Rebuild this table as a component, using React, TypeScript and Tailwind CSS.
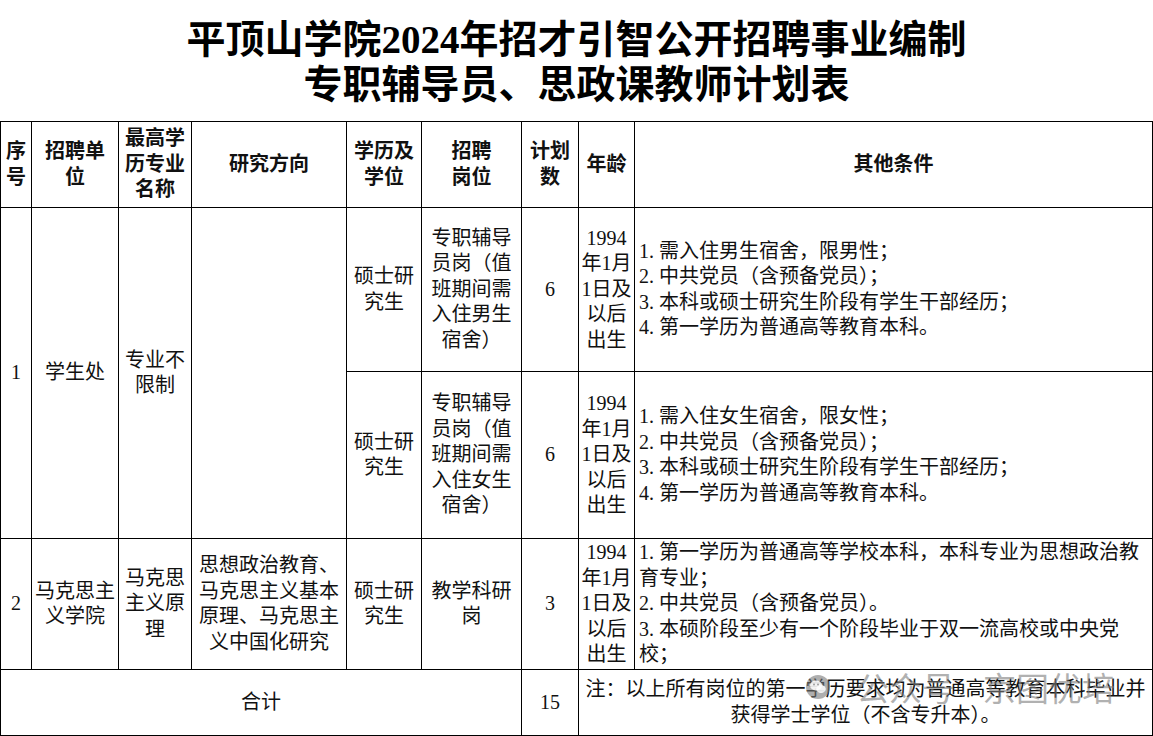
import React from "react";

type CellProps = {
  lines: string[];
  className?: string;
  bold?: boolean;
  align?: "center" | "left";
};

function Cell({ lines, className = "", bold = false, align = "center" }: CellProps) {
  return (
    <div
      className={
        "border-r border-b border-black flex items-center " +
        (align === "center" ? "justify-center text-center " : "justify-start text-left pl-[4px] ") +
        (bold ? "font-bold " : "font-normal ") +
        className
      }
    >
      <div className="leading-[25.5px]">
        {lines.map((l, i) => (
          <div key={i} className="whitespace-nowrap">
            {l}
          </div>
        ))}
      </div>
    </div>
  );
}

const age = ["1994", "年1月", "1日及", "以后", "出生"];

export default function App() {
  return (
    <div className="relative w-[1153px] h-[736px] overflow-hidden bg-white text-[#111] [font-family:'Liberation_Serif','Noto_Sans_CJK_SC',serif]">
      <div className="h-[121px] flex flex-col items-center pt-[17px] text-[39px] font-bold leading-[45px] text-black">
        <div className="whitespace-nowrap">平顶山学院2024年招才引智公开招聘事业编制</div>
        <div className="whitespace-nowrap">专职辅导员、思政课教师计划表</div>
      </div>

      <div className="grid w-[1153px] border-l border-t border-black grid-cols-[31px_87px_73px_155px_75px_100px_57px_56px_518px] grid-rows-[86px_164px_167px_131px_66px] text-[20px]">
        {/* header */}
        <Cell bold lines={["序", "号"]} />
        <Cell bold lines={["招聘单", "位"]} />
        <Cell bold lines={["最高学", "历专业", "名称"]} />
        <Cell bold lines={["研究方向"]} />
        <Cell bold lines={["学历及", "学位"]} />
        <Cell bold lines={["招聘", "岗位"]} />
        <Cell bold lines={["计划", "数"]} />
        <Cell bold lines={["年龄"]} />
        <Cell bold lines={["其他条件"]} />

        {/* row 1a */}
        <Cell className="row-span-2" lines={["1"]} />
        <Cell className="row-span-2" lines={["学生处"]} />
        <Cell className="row-span-2" lines={["专业不", "限制"]} />
        <Cell className="row-span-2" lines={[""]} />
        <Cell lines={["硕士研", "究生"]} />
        <Cell lines={["专职辅导", "员岗（值", "班期间需", "入住男生", "宿舍）"]} />
        <Cell lines={["6"]} />
        <Cell lines={age} />
        <Cell
          align="left"
          lines={[
            "1. 需入住男生宿舍，限男性；",
            "2. 中共党员（含预备党员）；",
            "3. 本科或硕士研究生阶段有学生干部经历；",
            "4. 第一学历为普通高等教育本科。",
          ]}
        />

        {/* row 1b */}
        <Cell lines={["硕士研", "究生"]} />
        <Cell lines={["专职辅导", "员岗（值", "班期间需", "入住女生", "宿舍）"]} />
        <Cell lines={["6"]} />
        <Cell lines={age} />
        <Cell
          align="left"
          lines={[
            "1. 需入住女生宿舍，限女性；",
            "2. 中共党员（含预备党员）；",
            "3. 本科或硕士研究生阶段有学生干部经历；",
            "4. 第一学历为普通高等教育本科。",
          ]}
        />

        {/* row 2 */}
        <Cell lines={["2"]} />
        <Cell lines={["马克思主", "义学院"]} />
        <Cell lines={["马克思", "主义原", "理"]} />
        <Cell lines={["思想政治教育、", "马克思主义基本", "原理、马克思主", "义中国化研究"]} />
        <Cell lines={["硕士研", "究生"]} />
        <Cell lines={["教学科研", "岗"]} />
        <Cell lines={["3"]} />
        <Cell lines={age} />
        <Cell
          align="left"
          lines={[
            "1. 第一学历为普通高等学校本科，本科专业为思想政治教",
            "育专业；",
            "2. 中共党员（含预备党员）。",
            "3. 本硕阶段至少有一个阶段毕业于双一流高校或中央党",
            "校；",
          ]}
        />

        {/* total */}
        <Cell className="col-span-6" lines={["合计"]} />
        <Cell lines={["15"]} />
        <Cell
          className="col-span-2"
          lines={["注：以上所有岗位的第一学历要求均为普通高等教育本科毕业并", "获得学士学位（不含专升本）。"]}
        />
      </div>

      {/* watermark */}
      <div className="absolute left-[806px] top-[669px] flex items-center gap-[28px] text-[33px] leading-[36px] text-[rgba(125,125,125,0.6)] [font-family:'Noto_Sans_CJK_SC',sans-serif] pointer-events-none">
        <div className="flex items-center gap-[26px]">
          <svg width="24" height="24" viewBox="0 0 24 24">
            <circle cx="12" cy="12" r="12" fill="rgba(120,120,120,0.6)" />
            <ellipse cx="10" cy="10.5" rx="6" ry="5" fill="rgba(255,255,255,0.85)" />
            <ellipse cx="15" cy="14" rx="4.8" ry="4" fill="rgba(255,255,255,0.85)" />
            <circle cx="8" cy="9.5" r="0.9" fill="rgba(110,110,110,0.7)" />
            <circle cx="12" cy="9.5" r="0.9" fill="rgba(110,110,110,0.7)" />
          </svg>
          <span className="whitespace-nowrap">公众号</span>
        </div>
        <span className="whitespace-nowrap">京图优培</span>
      </div>
    </div>
  );
}
